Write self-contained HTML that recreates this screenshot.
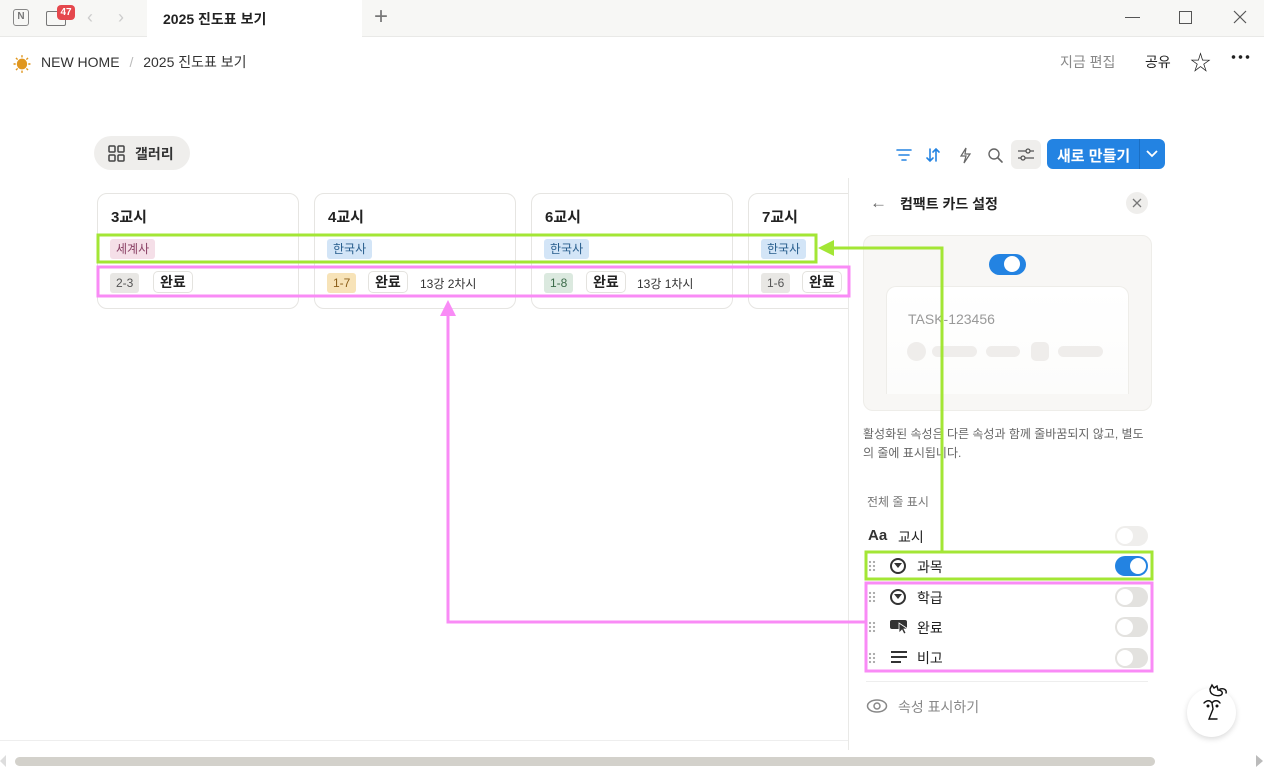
<!DOCTYPE html>
<html><head><meta charset="utf-8">
<style>
*{box-sizing:border-box;margin:0;padding:0}
body{width:1264px;height:768px;overflow:hidden;background:#fff;font-family:"Liberation Sans","Noto Sans CJK KR",sans-serif;color:#37352f;position:relative}
.a{position:absolute}
.tabbar{left:0;top:0;width:1264px;height:37px;background:#f7f7f5;border-bottom:1px solid #e9e9e7}
.card{top:193px;width:202px;height:116px;border:1px solid #e6e5e2;border-radius:10px;background:#fff}
.card h3{position:absolute;left:13px;top:12px;font-size:15px;font-weight:700;color:#222}
.tag{position:absolute;font-size:12px;padding:2px 6px;border-radius:3px;line-height:16px}
.btn{position:absolute;font-size:14px;font-weight:700;padding:1px 6px;border:1px solid #e4e3df;border-radius:5px;line-height:18px;color:#222}
.note{position:absolute;font-size:12px;color:#333}
.tog{position:absolute;width:33px;height:20px;border-radius:10px;background:#e3e2df}
.tog::after{content:"";position:absolute;left:2px;top:2px;width:16px;height:16px;border-radius:50%;background:#fff}
.tog.on{background:#2383e2}.tog.on::after{left:15px}
.row{position:absolute;left:890px;font-size:14px;color:#222}
.grip{position:absolute;left:868px;width:8px;height:12px;background:radial-gradient(circle,#aaa 1px,transparent 1.3px) 0 0/4px 4px}
</style></head><body>
<div class="a tabbar"></div>
<div class="a" style="left:147px;top:0;width:215px;height:37px;background:#fff"></div>
<div class="a" style="left:13px;top:9px;width:16px;height:17px;border:1.5px solid #888;border-radius:3px;font-size:10px;font-weight:700;color:#777;text-align:center;line-height:14px">N</div>
<div class="a" style="left:46px;top:11px;width:20px;height:15px;border:1.5px solid #777;border-radius:2px"></div>
<div class="a" style="left:57px;top:5px;width:18px;height:15px;background:#e5484d;border-radius:4px;color:#fff;font-size:10px;font-weight:700;text-align:center;line-height:15px">47</div>
<div class="a" style="left:87px;top:7px;font-size:18px;color:#ccc">‹</div>
<div class="a" style="left:118px;top:7px;font-size:18px;color:#ccc">›</div>
<div class="a" style="left:163px;top:9px;font-size:14px;font-weight:700;color:#222">2025 진도표 보기</div>
<div class="a" style="left:374px;top:3px;font-size:24px;color:#777;font-weight:300">+</div>
<div class="a" style="left:1125px;top:17px;width:15px;height:1px;background:#555"></div>
<div class="a" style="left:1179px;top:11px;width:13px;height:13px;border:1px solid #555"></div>
<svg class="a" style="left:1233px;top:10px" width="14" height="14"><path d="M1 1l12 12M13 1L1 13" stroke="#555" stroke-width="1.2"/></svg>

<div class="a" style="left:13px;top:51px;font-size:18px;color:#e0961e">☀</div>
<div class="a" style="left:41px;top:52px;font-size:14px;color:#333">NEW HOME <span style="color:#bbb;margin:0 6px">/</span> 2025 진도표 보기</div>
<div class="a" style="left:1060px;top:52px;font-size:14px;color:#888">지금 편집</div>
<div class="a" style="left:1145px;top:52px;font-size:14px;color:#222">공유</div>
<div class="a" style="left:1190px;top:47px;font-size:21px;color:#222">☆</div>
<div class="a" style="left:1230px;top:55px;width:20px;height:4px;background:radial-gradient(circle,#222 1.6px,transparent 2px) 0 0/7px 4px"></div>

<div class="a" style="left:94px;top:136px;width:96px;height:34px;background:#efeeec;border-radius:17px"></div>
<svg class="a" style="left:108px;top:145px" width="18" height="17" viewBox="0 0 18 17"><g fill="none" stroke="#444" stroke-width="1.5"><rect x="1" y="1" width="6" height="6" rx="1"/><rect x="10" y="1" width="6" height="6" rx="1"/><rect x="1" y="10" width="6" height="6" rx="1"/><rect x="10" y="10" width="6" height="6" rx="1"/></g></svg>
<div class="a" style="left:135px;top:144px;font-size:14px;font-weight:700;color:#333">갤러리</div>

<svg class="a" style="left:895px;top:146px" width="120" height="18" viewBox="0 0 120 18"><g fill="none" stroke-width="1.6" stroke-linecap="round"><path d="M2 4h14M4 9h10M7 14h4" stroke="#2383e2"/><path d="M35 3v12M32 12l3 3 3-3M41 15V3M38 6l3-3 3 3" stroke="#2383e2"/><path d="M71 2l-5 8h5l-2 7 6-9h-5z" stroke="#666" stroke-width="1.2"/><circle cx="99" cy="8" r="5" stroke="#666" stroke-width="1.4"/><path d="M103 12l4 4" stroke="#666"/></g></svg>
<div class="a" style="left:1011px;top:140px;width:30px;height:29px;background:#efeeec;border-radius:6px"></div>
<svg class="a" style="left:1017px;top:147px" width="18" height="15" viewBox="0 0 18 15"><g fill="none" stroke="#555" stroke-width="1.3"><path d="M1 4h16M1 11h16"/><circle cx="11" cy="4" r="2" fill="#efeeec"/><circle cx="6" cy="11" r="2" fill="#efeeec"/></g></svg>
<div class="a" style="left:1047px;top:139px;width:118px;height:30px;background:#2383e2;border-radius:6px"></div>
<div class="a" style="left:1057px;top:145px;font-size:15px;font-weight:700;color:#fff">새로 만들기</div>
<div class="a" style="left:1139px;top:139px;width:1px;height:30px;background:#1a6fc4"></div>
<svg class="a" style="left:1146px;top:149px" width="12" height="10"><path d="M1 2l5 5 5-5" fill="none" stroke="#fff" stroke-width="1.8"/></svg>

<div class="a card" style="left:97px"><h3>3교시</h3><span class="tag" style="left:12px;top:45px;background:#f5dfe8;color:#8a4065">세계사</span><span class="tag" style="left:12px;top:79px;background:#e8e7e4;color:#555">2-3</span><span class="btn" style="left:55px;top:77px">완료</span></div>
<div class="a card" style="left:314px"><h3>4교시</h3><span class="tag" style="left:12px;top:45px;background:#d3e5f7;color:#275d8d">한국사</span><span class="tag" style="left:12px;top:79px;background:#f7e3b8;color:#8b5e18">1-7</span><span class="btn" style="left:53px;top:77px">완료</span><span class="note" style="left:105px;top:81px">13강 2차시</span></div>
<div class="a card" style="left:531px"><h3>6교시</h3><span class="tag" style="left:12px;top:45px;background:#d3e5f7;color:#275d8d">한국사</span><span class="tag" style="left:12px;top:79px;background:#dbe9df;color:#3c6b4a">1-8</span><span class="btn" style="left:54px;top:77px">완료</span><span class="note" style="left:105px;top:81px">13강 1차시</span></div>
<div class="a card" style="left:748px;width:120px"><h3>7교시</h3><span class="tag" style="left:12px;top:45px;background:#d3e5f7;color:#275d8d">한국사</span><span class="tag" style="left:12px;top:79px;background:#e8e7e4;color:#555">1-6</span><span class="btn" style="left:53px;top:77px">완료</span></div>

<!-- panel -->
<div class="a" style="left:848px;top:178px;width:416px;height:572px;background:#fff;border-left:1px solid #e9e9e7"></div>
<div class="a" style="left:0;top:740px;width:848px;height:1px;background:#eee"></div>
<div class="a" style="left:870px;top:193px;font-size:17px;color:#666">←</div>
<div class="a" style="left:900px;top:194px;font-size:14px;font-weight:700;color:#222">컴팩트 카드 설정</div>
<div class="a" style="left:1126px;top:192px;width:22px;height:22px;border-radius:50%;background:#efeeec"></div>
<svg class="a" style="left:1132px;top:198px" width="10" height="10"><path d="M1 1l8 8M9 1L1 9" stroke="#777" stroke-width="1.3"/></svg>
<div class="a" style="left:863px;top:235px;width:289px;height:176px;background:#f8f7f5;border:1px solid #eeede9;border-radius:10px"></div>
<div class="a tog on" style="left:989px;top:254px;width:37px;height:21px;border-radius:11px"></div>
<div class="a" style="left:886px;top:286px;width:243px;height:108px;background:linear-gradient(#fff,#fcfcfb);border:1px solid #eeede9;border-bottom:none;border-radius:10px 10px 0 0"></div>
<div class="a" style="left:908px;top:311px;font-size:14px;color:#999">TASK-123456</div>
<div class="a" style="left:907px;top:342px;width:19px;height:19px;border-radius:50%;background:#efedeb"></div>
<div class="a" style="left:932px;top:346px;width:45px;height:11px;border-radius:6px;background:#efedeb"></div>
<div class="a" style="left:986px;top:346px;width:34px;height:11px;border-radius:6px;background:#efedeb"></div>
<div class="a" style="left:1031px;top:342px;width:18px;height:19px;border-radius:5px;background:#efedeb"></div>
<div class="a" style="left:1058px;top:346px;width:45px;height:11px;border-radius:6px;background:#efedeb"></div>
<div class="a" style="left:863px;top:425px;width:286px;font-size:12px;line-height:19px;color:#666;word-break:break-all">활성화된 속성은 다른 속성과 함께 줄바꿈되지 않고, 별도의 줄에 표시됩니다.</div>
<div class="a" style="left:867px;top:493px;font-size:12px;color:#777">전체 줄 표시</div>
<div class="a" style="left:868px;top:527px;font-size:15px;font-weight:700;color:#333">Aa</div>
<div class="row" style="left:898px;top:527px">교시</div>
<div class="a tog" style="left:1115px;top:526px;background:#efeeec"></div>

<div class="grip" style="top:560px"></div><div class="a" style="left:890px;top:558px;width:16px;height:16px;border:2px solid #333;border-radius:50%"></div><div class="a" style="left:894px;top:563px;width:0;height:0;border-left:4px solid transparent;border-right:4px solid transparent;border-top:5px solid #333"></div>
<div class="row" style="left:917px;top:557px">과목</div><div class="a tog on" style="left:1115px;top:556px"></div>
<div class="grip" style="top:591px"></div><div class="a" style="left:890px;top:589px;width:16px;height:16px;border:2px solid #333;border-radius:50%"></div><div class="a" style="left:894px;top:594px;width:0;height:0;border-left:4px solid transparent;border-right:4px solid transparent;border-top:5px solid #333"></div>
<div class="row" style="left:917px;top:588px">학급</div><div class="a tog" style="left:1115px;top:587px"></div>
<div class="grip" style="top:621px"></div><div class="a" style="left:890px;top:620px;width:17px;height:9px;background:#333;border-radius:2px"></div><svg class="a" style="left:898px;top:622px" width="10" height="13"><path d="M1 1l0 10 3-3 2 4 2-1-2-4 4 0z" fill="#333" stroke="#fff" stroke-width=".8"/></svg>
<div class="row" style="left:917px;top:618px">완료</div><div class="a tog" style="left:1115px;top:617px"></div>
<div class="grip" style="top:652px"></div><svg class="a" style="left:890px;top:650px" width="18" height="14"><path d="M1 2h16M1 7h16M1 12h10" stroke="#333" stroke-width="2"/></svg>
<div class="row" style="left:917px;top:648px">비고</div><div class="a tog" style="left:1115px;top:648px"></div>
<div class="a" style="left:866px;top:681px;width:282px;height:1px;background:#eee"></div>
<svg class="a" style="left:866px;top:698px" width="22" height="16"><ellipse cx="11" cy="8" rx="9.5" ry="6" fill="none" stroke="#888" stroke-width="1.5"/><circle cx="11" cy="8" r="3" fill="none" stroke="#888" stroke-width="1.5"/></svg>
<div class="a" style="left:898px;top:697px;font-size:14px;color:#888">속성 표시하기</div>

<div class="a" style="left:1187px;top:688px;width:49px;height:49px;border-radius:50%;background:#fff;box-shadow:0 2px 6px rgba(0,0,0,.15)"></div>
<svg class="a" style="left:1200px;top:675px" width="36" height="52" viewBox="0 0 36 52"><g fill="none" stroke="#111" stroke-width="1.4" stroke-linecap="round"><path d="M10 14l2-4 2 3 3-2 1 4c3 0 5 2 4 4s-5 2-8 1-4-3-4-6zM20 14c4-1 7 1 6 4"/><path d="M4 28c3-3 6-3 8 0 2-3 6-3 8 0M12 28l1 6-4 10h8"/><circle cx="8" cy="31" r=".8" fill="#111"/><circle cx="17" cy="31" r=".8" fill="#111"/></g></svg>

<div class="a" style="left:0;top:752px;width:1264px;height:16px;background:#fff"></div>
<div class="a" style="left:15px;top:757px;width:1140px;height:9px;border-radius:5px;background:#d3d1cb"></div>
<div class="a" style="left:1256px;top:755px;width:0;height:0;border-top:6px solid transparent;border-bottom:6px solid transparent;border-left:7px solid #bbb"></div>
<div class="a" style="left:0;top:755px;width:0;height:0;border-top:6px solid transparent;border-bottom:6px solid transparent;border-right:6px solid #ddd"></div>

<!-- annotations -->
<svg class="a" style="left:0;top:0" width="1264" height="768">
<g fill="none" stroke-width="3">
<rect x="98" y="235" width="718" height="27" stroke="#a3e635"/>
<rect x="98" y="267" width="751" height="29" stroke="#f98bf6"/>
<rect x="866" y="552" width="286" height="27" stroke="#a3e635"/>
<rect x="866" y="583" width="286" height="88" stroke="#f98bf6"/>
<path d="M942 552V248H830" stroke="#a3e635"/>
<path d="M866 622H448V314" stroke="#f98bf6"/>
</g>
<path d="M818 248l16-8v16z" fill="#a3e635"/>
<path d="M448 300l-8 16h16z" fill="#f98bf6"/>
</svg>
</body></html>
